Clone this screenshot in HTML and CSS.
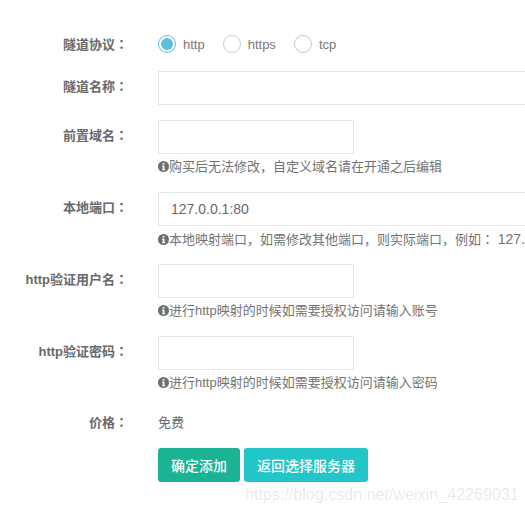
FILE: index.html
```html
<!DOCTYPE html>
<html lang="zh-CN">
<head>
    <meta charset="UTF-8">
    <title>添加隧道</title>
    <link rel="stylesheet" href="styles.css">
</head>
<body>
    <form class="tunnel-form">
        <div class="form-row radio-row">
            <label class="row-label">隧道协议<span class="colon">：</span></label>
            <div class="row-field radio-group">
                <span class="radio checked"></span><span class="radio-text">http</span>
                <span class="radio"></span><span class="radio-text">https</span>
                <span class="radio"></span><span class="radio-text">tcp</span>
            </div>
        </div>

        <div class="form-row">
            <label class="row-label">隧道名称<span class="colon">：</span></label>
            <div class="row-field">
                <input class="text-input wide" type="text">
            </div>
        </div>

        <div class="form-row">
            <label class="row-label">前置域名<span class="colon">：</span></label>
            <div class="row-field">
                <input class="text-input" type="text">
                <p class="hint"><svg class="info-icon" viewBox="0 0 12 12"><circle cx="6" cy="6" r="6" fill="#6b6d6f"/><path d="M5 2.2h2v1.7H5zM4.5 5h2.6v3.6h.7V10H4.4V8.6h.8V6.3h-.7z" fill="#fff"/></svg>购买后无法修改，自定义域名请在开通之后编辑</p>
            </div>
        </div>

        <div class="form-row">
            <label class="row-label">本地端口<span class="colon">：</span></label>
            <div class="row-field">
                <input class="text-input wide" type="text" value="127.0.0.1:80">
                <p class="hint"><svg class="info-icon" viewBox="0 0 12 12"><circle cx="6" cy="6" r="6" fill="#6b6d6f"/><path d="M5 2.2h2v1.7H5zM4.5 5h2.6v3.6h.7V10H4.4V8.6h.8V6.3h-.7z" fill="#fff"/></svg>本地映射端口，如需修改其他端口，则实际端口，例如<span class="colon">：</span> <span class="port-sample">127.0.0.1:8080</span></p>
            </div>
        </div>

        <div class="form-row">
            <label class="row-label">http验证用户名<span class="colon">：</span></label>
            <div class="row-field">
                <input class="text-input" type="text">
                <p class="hint"><svg class="info-icon" viewBox="0 0 12 12"><circle cx="6" cy="6" r="6" fill="#6b6d6f"/><path d="M5 2.2h2v1.7H5zM4.5 5h2.6v3.6h.7V10H4.4V8.6h.8V6.3h-.7z" fill="#fff"/></svg>进行http映射的时候如需要授权访问请输入账号</p>
            </div>
        </div>

        <div class="form-row">
            <label class="row-label">http验证密码<span class="colon">：</span></label>
            <div class="row-field">
                <input class="text-input" type="text">
                <p class="hint"><svg class="info-icon" viewBox="0 0 12 12"><circle cx="6" cy="6" r="6" fill="#6b6d6f"/><path d="M5 2.2h2v1.7H5zM4.5 5h2.6v3.6h.7V10H4.4V8.6h.8V6.3h-.7z" fill="#fff"/></svg>进行http映射的时候如需要授权访问请输入密码</p>
            </div>
        </div>

        <div class="form-row price-row">
            <label class="row-label">价格<span class="colon">：</span></label>
            <div class="row-field">免费</div>
        </div>

        <div class="form-row button-row">
            <div class="row-field buttons">
                <button class="btn btn-primary" type="button">确定添加</button>
                <button class="btn btn-info" type="button">返回选择服务器</button>
            </div>
        </div>
    </form>

    <div class="watermark">https://blog.csdn.net/weixin_42269031</div>
</body>
</html>
```

FILE: styles.css
```css
* {
    margin: 0;
    padding: 0;
    box-sizing: border-box;
}

html,
body {
    height: 100%;
    overflow: hidden;
}

body {
    position: relative;
    background-color: #fff;
    color: #676a6c;
    font-family: "Liberation Sans", "Noto Sans CJK SC", sans-serif;
    font-size: 13px;
}

.tunnel-form {
    width: 800px;
    padding-top: 32px;
}

.form-row {
    display: flex;
    margin-bottom: 15px;
}

.row-label {
    width: 128px;
    flex-shrink: 0;
    padding-top: 5px;
    font-weight: bold;
    text-align: right;
    white-space: nowrap;
}

/* centred full-width colon, as in the reference */
.colon {
    font-family: "Noto Sans CJK TC", sans-serif;
    font-feature-settings: "locl" 0;
}

.row-field {
    margin-left: 30px;
    flex: 1;
}

/* radios */
.radio-row {
    height: 24px;
}

.radio-row .row-label {
    padding-top: 2px;
}

.radio-group {
    display: flex;
    align-items: center;
    height: 24px;
}

.radio {
    position: relative;
    width: 18px;
    height: 18px;
    border: 1px solid #c8c8c8;
    border-radius: 50%;
    margin-right: 7px;
}

.radio.checked {
    border-color: #5bc0de;
}

.radio.checked::after {
    content: "";
    position: absolute;
    top: 2px;
    left: 2px;
    width: 12px;
    height: 12px;
    border-radius: 50%;
    background-color: #5bc0de;
}

.radio-text {
    margin-right: 18px;
    color: #777;
    font-size: 13px;
}

/* inputs */
.text-input {
    display: block;
    width: 196px;
    height: 34px;
    padding: 0 12px;
    border: 1px solid #e5e6e7;
    color: #676a6c;
    font-family: inherit;
    font-size: 14px;
}

.text-input.wide {
    width: 600px;
}

.hint {
    height: 23px;
    padding-top: 4px;
    color: #737373;
    font-size: 13px;
    line-height: 18px;
    white-space: nowrap;
}

.port-sample {
    font-size: 14px;
}

.info-icon {
    width: 11px;
    height: 11px;
    vertical-align: -1px;
}

/* price and buttons */
.price-row {
    height: 25px;
}

.price-row .row-label {
    padding-top: 4px;
}

.price-row .row-field {
    padding-top: 4px;
    font-size: 13px;
}

.button-row .row-field {
    margin-left: 158px;
}

.buttons {
    display: flex;
    gap: 4px;
}

.btn {
    height: 34px;
    padding: 0 13px;
    border: none;
    border-radius: 3px;
    color: #fff;
    font-family: inherit;
    font-size: 14px;
    font-weight: 500;
}

.btn-primary {
    background-color: #1ab394;
}

.btn-info {
    background-color: #23c6c8;
}

.watermark {
    position: absolute;
    left: 245px;
    top: 485px;
    color: rgba(0, 0, 0, 0.1);
    font-size: 16.1px;
    white-space: nowrap;
}
```
